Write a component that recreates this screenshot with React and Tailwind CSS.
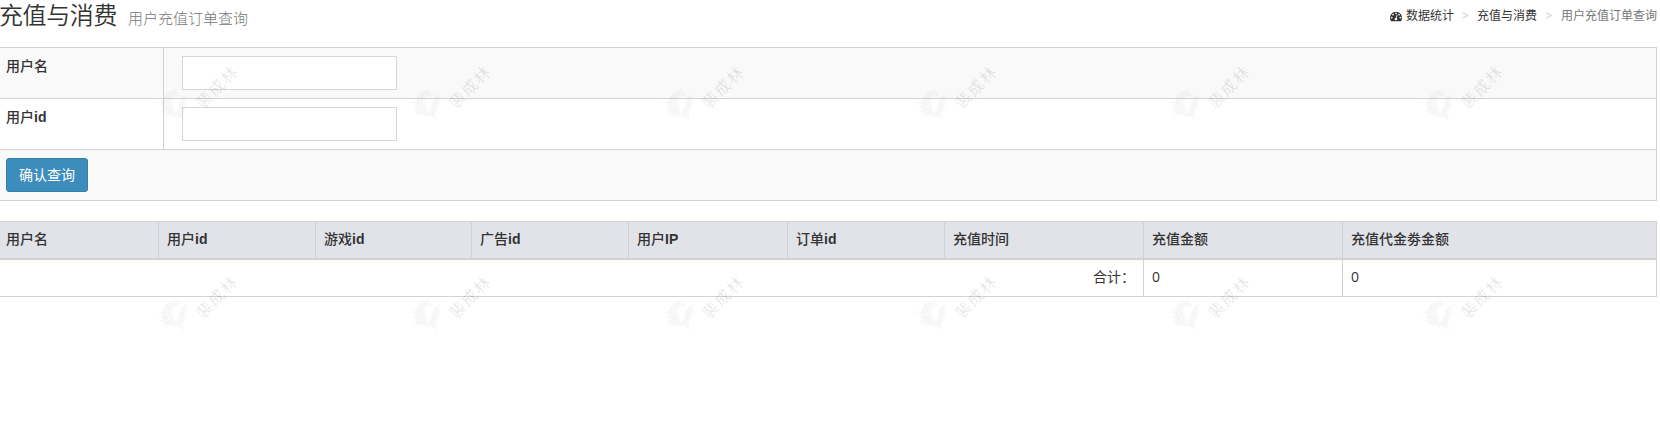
const columns = [
  ['用户名', ''],
  ['用户', 'id'],
  ['游戏', 'id'],
  ['广告', 'id'],
  ['用户', 'IP'],
  ['订单', 'id'],
  ['充值时间', ''],
  ['充值金额', ''],
  ['充值代金劵金额', ''],
];

function DashboardIcon() {
  return (
    <svg viewBox="0 0 1792 1792" className="mr-[4px] h-3 w-3 fill-[#333]">
      <path d="M384 1152q0-53-37.5-90.5t-90.5-37.5-90.5 37.5-37.5 90.5 37.5 90.5 90.5 37.5 90.5-37.5 37.5-90.5zm192-448q0-53-37.5-90.5t-90.5-37.5-90.5 37.5-37.5 90.5 37.5 90.5 90.5 37.5 90.5-37.5 37.5-90.5zm428 481l101-382q6-26-7.5-48.5t-38.5-29.5-48 6.5-30 39.5l-101 382q-60 5-107 43.5t-63 98.5q-20 77 20 146t117 89 146-20 89-117q16-60-6-117t-72-91zm660-33q0-53-37.5-90.5t-90.5-37.5-90.5 37.5-37.5 90.5 37.5 90.5 90.5 37.5 90.5-37.5 37.5-90.5zm-640-640q0-53-37.5-90.5t-90.5-37.5-90.5 37.5-37.5 90.5 37.5 90.5 90.5 37.5 90.5-37.5 37.5-90.5zm448 192q0-53-37.5-90.5t-90.5-37.5-90.5 37.5-37.5 90.5 37.5 90.5 90.5 37.5 90.5-37.5 37.5-90.5zm320 448q0 261-141 483-19 29-54 29h-1402q-35 0-54-29-141-221-141-483 0-182 71-348t191-286 286-191 348-71 348 71 286 191 191 286 71 348z" />
    </svg>
  );
}

function Watermark() {
  return (
    <div className="flex h-[58px] w-[253px] shrink-0 items-end">
      <svg viewBox="0 0 34 34" className="h-[34px] w-[34px] shrink-0">
        <path
          className="fill-black/[0.025]"
          d="M0 14.500L7 12C8 8 10 5 13 3.500L18 2 20 0 20.500 3 23 5 24 8 21 8.500 18 8C16 11 15.500 14 17 17 18 20 18.500 22 17.500 24 22 22 23 18 23 14 24 10 27 7 32 6 30 8 30 10 31 13 31 17 29.500 20 28 23L27 26 28 34C26 31 24 29.500 22 28.500L18 29 14 27 10 29.500 11 26.500 5 28 8 24.500 3 22.500 7 21 4 17.500 7.500 17.500 5 15.500Z"
        />
        <path
          className="fill-none stroke-black/[0.025]"
          d="M13 5c-4 4-6 9-3 15l5 5M18 4c-5 3-7 7-5 13l4 7M29 9c-5 4-2 10-8 16M27 14c0 5-2 8-4 13M6 14l5 2M6 19l6 2M7 24l7 1M21 26l5 3"
        />
      </svg>
      <div className="ml-[-5px] mb-[27px] w-[64px] -rotate-[46deg] whitespace-nowrap text-center text-[16px] font-normal leading-[16px] tracking-[1.500px] text-black/[0.1]">
        裴成林
      </div>
    </div>
  );
}

function WatermarkRow() {
  return (
    <div className="flex w-[1520px]">
      {[0, 1, 2, 3, 4, 5].map((n) => <Watermark key={n} />)}
    </div>
  );
}

function Label({ text, latin }) {
  return (
    <span className="font-medium">
      {text}
      {latin && <span className="font-['Liberation_Sans',sans-serif] font-bold">{latin}</span>}
    </span>
  );
}

function FormRow({ text, latin, striped }) {
  return (
    <div className={striped ? 'flex h-[51px] border-b border-[#d2d2d2] bg-[#f9f9f9]' : 'flex h-[51px] border-b border-[#d2d2d2]'}>
      <div className="w-[164px] shrink-0 border-r border-[#d2d2d2] pt-2 pl-1.5 leading-5">
        <Label text={text} latin={latin} />
      </div>
      <div className="pt-2 pl-[18px]">
        <input className="block h-[34px] w-[215px] border border-[#d2d6de] bg-white px-3 outline-none" />
      </div>
    </div>
  );
}

export default function App() {
  return (
    <div className="relative h-[428px] w-[1660px] overflow-hidden bg-white font-['Open_Sans','Noto_Sans_CJK_SC',sans-serif] text-sm text-[#333]">
      <header className="flex h-[47px] justify-between pr-[3px]">
        <h1 className="ml-[-1px] flex items-baseline text-[24px] leading-[29px]">
          <span className="font-[350] tracking-[-0.4px]">充值与消费</span>
          <small className="ml-[11px] text-[15px] font-light text-[#777]">用户充值订单查询</small>
        </h1>
        <nav className="flex h-[31px] items-center text-xs">
          <DashboardIcon />
          <span>数据统计</span>
          <span className="w-[23px] text-center text-[#ccc]">&gt;</span>
          <span>充值与消费</span>
          <span className="w-[24px] text-center text-[#ccc]">&gt;</span>
          <span className="text-[#777]">用户充值订单查询</span>
        </nav>
      </header>

      <form className="w-[1657px] border-t border-r border-[#d2d2d2]">
        <FormRow text="用户名" striped />
        <FormRow text="用户" latin="id" />
        <div className="h-[51px] border-b border-[#d2d2d2] bg-[#f9f9f9] pt-2 pl-1.5">
          <button type="button" className="block h-[34px] w-[82px] rounded-[3px] border border-[#367fa9] bg-[#3c8dbc] pb-px text-sm leading-5 text-white">
            确认查询
          </button>
        </div>
      </form>

      <section className="mt-5 w-[1657px] border-t border-r border-[#d2d2d2]">
        <div className="grid h-[38px] grid-cols-[159px_157px_156px_157px_159px_157px_199px_199px_313px] border-b-2 border-[#d2d2d2] bg-[#e2e3e9] leading-5">
          {columns.map(([text, latin], i) => (
            <div key={i} className="border-r border-[#d2d2d2] pt-[7px] pl-2 first:pl-1.5 last:border-r-0">
              <Label text={text} latin={latin} />
            </div>
          ))}
        </div>
        <div className="grid h-[37px] grid-cols-[1144px_199px_313px] border-b border-[#d2d2d2] leading-5">
          <div className="border-r border-[#d2d2d2] pt-[7px] pr-2 text-right">合计：</div>
          <div className="border-r border-[#d2d2d2] pt-[7px] pl-2">0</div>
          <div className="pt-[7px] pl-2">0</div>
        </div>
      </section>

      <div aria-hidden="true" className="pointer-events-none absolute top-[64px] left-[156px] flex flex-col gap-[152px]">
        <WatermarkRow />
        <WatermarkRow />
      </div>
    </div>
  );
}
